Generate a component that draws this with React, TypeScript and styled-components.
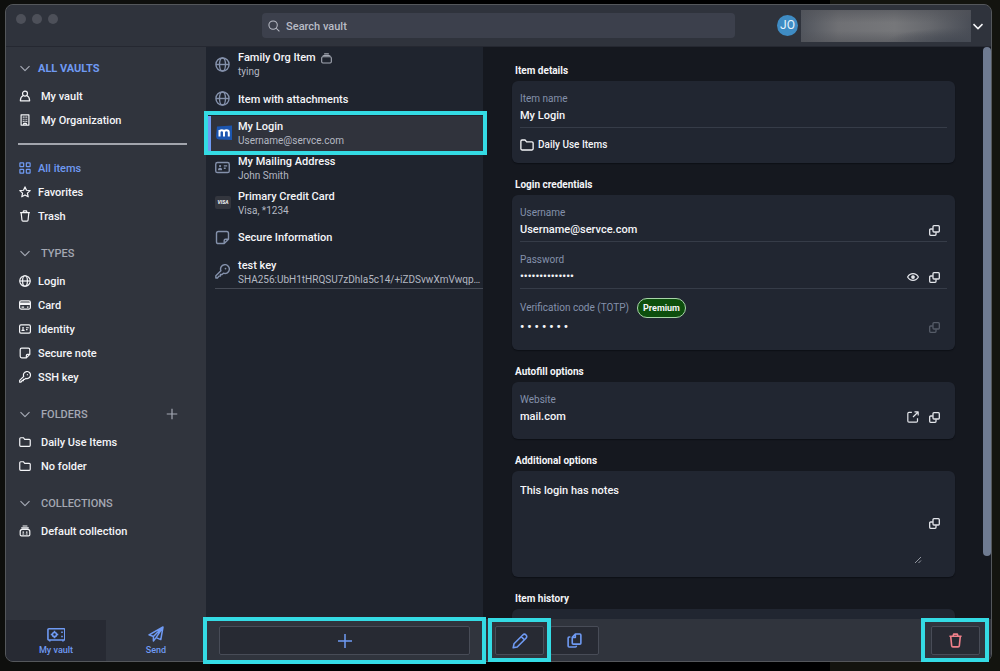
import React from "react";
import styled, { createGlobalStyle, css } from "styled-components";

const color = {
  chrome: "#30343d",
  chromeDark: "#272a33",
  list: "#1f242e",
  page: "#15181f",
  card: "#212631",
  line: "#363c48",
  text: "#f4f5f8",
  sub: "#b4b8c2",
  muted: "#a4a8b3",
  label: "#8491ab",
  blue: "#6f9af3",
  cyan: "#34dbe4",
  red: "#f0808a",
};

const GlobalStyle = createGlobalStyle`
  * { box-sizing: border-box; }
  body {
    margin: 0;
    background: linear-gradient(90deg, #0e0f0d 21%, #000 21%, #000 83%, #13140f 83%);
    color: ${color.text};
    font: 500 11px/16px Roboto, "Liberation Sans", sans-serif;
  }
  button, input, textarea { font: inherit; color: inherit; }
  button { border: 0; padding: 0; background: none; cursor: pointer; }
  ul { list-style: none; margin: 0; padding: 0; }
`;

const Page = styled.div`
  display: flex;
  height: 100vh;
  padding: 4px 8px 9px 5px;
`;

const AppWindow = styled.div`
  flex: 1;
  min-width: 0;
  display: flex;
  flex-direction: column;
  border: 1px solid #54575b;
  border-radius: 8px;
  background: ${color.chrome};
`;

const Header = styled.header`
  display: grid;
  grid-template-columns: 1fr 48% 1fr;
  height: 42px;
  border-bottom: 1px solid #252831;
  border-radius: 8px 8px 0 0;
  background: #2f333c;
`;

const Lights = styled.div`
  display: flex;
  gap: 6px;
  padding: 9px 10px;
`;

const Light = styled.span`
  width: 10px;
  height: 10px;
  border-radius: 50%;
  background: #4d5059;
`;

const Search = styled.label`
  align-self: center;
  display: flex;
  align-items: center;
  gap: 6px;
  height: 25px;
  padding: 0 6px;
  border-radius: 4px;
  background: #3c404c;
  color: #b9bcc6;
`;

const SearchInput = styled.input`
  flex: 1;
  border: 0;
  padding: 2px 0 0;
  background: none;
  outline: 0;
  &::placeholder { color: #b9bcc6; opacity: 1; }
`;

const Account = styled.button`
  justify-self: end;
  align-self: center;
  display: flex;
  align-items: center;
  gap: 1px;
  padding-right: 7px;
`;

const Avatar = styled.span`
  width: 21px;
  height: 21px;
  margin-right: 2px;
  border-radius: 50%;
  background: #3f8cc4;
  color: #e8f4fc;
  font-size: 12px;
  font-weight: 400;
  line-height: 21px;
  text-align: center;
`;

const Redacted = styled.span`
  width: 170px;
  height: 32px;
  background:
    radial-gradient(ellipse at 92% 100%, #454a54 0, transparent 32%),
    linear-gradient(180deg, rgba(80, 82, 88, 0.6), transparent 40%, transparent 65%, rgba(80, 82, 88, 0.6)),
    linear-gradient(90deg, #51555d, #6f7074 22%, #76777a 55%, #67696e 75%, #4a4e57);
`;

const Columns = styled.div`
  flex: 1;
  min-height: 0;
  display: grid;
  grid-template-columns: 200px 277px minmax(0, 1fr);
`;

const Column = styled.div`
  display: flex;
  flex-direction: column;
  min-height: 0;
  min-width: 0;
`;

const Nav = styled.nav`
  flex: 1;
  display: flex;
  flex-direction: column;
  gap: 9px;
  padding: 5px 0;
  line-height: 17px;
`;

const Group = styled.section``;

const GroupHead = styled.div<{ $active?: boolean }>`
  display: flex;
  align-items: center;
  justify-content: space-between;
  height: 32px;
  padding: 0 28px 0 13px;
  color: ${(p) => (p.$active ? color.blue : color.muted)};
  font-weight: ${(p) => (p.$active ? 700 : 500)};
`;

const NavButton = styled.button<{ $wide?: boolean; $active?: boolean }>`
  display: flex;
  align-items: center;
  gap: ${(p) => (p.$wide ? 10 : 7)}px;
  color: ${(p) => (p.$active ? color.blue : "inherit")};
  font-weight: inherit;
  svg { flex: none; }
`;

const NavItem = styled.li`
  display: flex;
  height: 24px;
  padding-left: 13px;
`;

const Divider = styled.hr`
  height: 2px;
  margin: 2px 19px 2px 12px;
  border: 0;
  background: #a2a5ad;
`;

const Tabs = styled.div`
  display: grid;
  grid-template-columns: 1fr 1fr;
  height: 41px;
`;

const Tab = styled.button<{ $active?: boolean }>`
  display: flex;
  flex-direction: column;
  align-items: center;
  justify-content: center;
  gap: 1px;
  padding-top: 2px;
  border-radius: 0 0 0 7px;
  background: ${(p) => (p.$active ? color.chromeDark : "transparent")};
  color: ${color.blue};
  font-size: 9px;
  line-height: 14px;
`;

const ItemColumn = styled(Column)`
  background: ${color.list};
`;

const Items = styled.ul`
  display: grid;
  grid-auto-rows: 1fr;
  height: 242px;
  margin-bottom: auto;
`;

const ItemRow = styled.li<{ $selected?: boolean; $last?: boolean }>`
  position: relative;
  display: flex;
  min-width: 0;
  padding-left: 9px;
  ${(p) => p.$selected && css`
    background: #30333c;
    box-shadow: inset 5px 0 ${color.blue};
  `}
  ${(p) => p.$last && css`
    &::after {
      content: "";
      position: absolute;
      inset: auto 0 0 9px;
      height: 1px;
      background: #454a55;
    }
  `}
`;

const ItemButton = styled.button`
  flex: 1;
  min-width: 0;
  display: grid;
  grid-template-columns: 16px minmax(0, 1fr);
  align-items: center;
  gap: 7px;
  text-align: left;
  color: #8491ab;
`;

const ItemText = styled.span`
  display: flex;
  flex-direction: column;
  padding-top: 2px;
`;

const ItemTitle = styled.span`
  display: flex;
  align-items: center;
  gap: 5px;
  color: ${color.text};
  line-height: 14px;
  svg { color: ${color.muted}; }
`;

const ItemSub = styled.span`
  color: ${color.sub};
  font-size: 10px;
  font-weight: 400;
  line-height: 14px;
  white-space: nowrap;
`;

const CardBrand = styled.span`
  height: 13px;
  border-radius: 2px;
  background: #33363e;
  color: #e6e7ea;
  font-size: 5px;
  font-style: italic;
  font-weight: 900;
  line-height: 13px;
  text-align: center;
`;

const Footer = styled.footer<{ $round?: boolean }>`
  display: flex;
  gap: 6px;
  height: 42px;
  padding: ${(p) => (p.$round ? "7px 11px 6px 12px" : "7px 13px 6px")};
  background: ${color.chrome};
  border-radius: ${(p) => (p.$round ? "0 0 7px 0" : "0")};
`;

const Action = styled.div<{ $grow?: boolean; $end?: boolean }>`
  position: relative;
  display: flex;
  width: 49px;
  ${(p) => p.$grow && css`flex: 1;`}
  ${(p) => p.$end && css`margin-left: auto;`}
`;

const ActionButton = styled.button<{ $danger?: boolean }>`
  flex: 1;
  display: flex;
  align-items: center;
  justify-content: center;
  border: 1px solid #484c57;
  border-radius: 2px;
  background: ${color.chromeDark};
  color: ${(p) => (p.$danger ? color.red : color.blue)};
`;

const Highlight = styled.span<{ $inset: string }>`
  position: absolute;
  z-index: 2;
  inset: ${(p) => p.$inset};
  border: 4px solid ${color.cyan};
  pointer-events: none;
`;

const DetailColumn = styled(Column)`
  background: ${color.page};
  border-radius: 0 0 7px 0;
`;

const DetailBody = styled.div`
  flex: 1;
  min-height: 0;
  display: flex;
`;

const DetailScroll = styled.main`
  flex: 1;
  min-width: 0;
  overflow: auto;
  scrollbar-width: none;
  display: flex;
  flex-direction: column;
  gap: 10px;
  padding: 12px 28px 12px 29px;
`;

const ScrollTrack = styled.div`
  width: 8px;
`;

const ScrollThumb = styled.div`
  height: 89%;
  border-radius: 4px;
  background: #6f7b91;
`;

const SectionTitle = styled.h2`
  margin: 0;
  padding: 2px 0 0 3px;
  font-size: 10px;
  font-weight: 700;
  line-height: 20px;
`;

const Card = styled.div<{ $min: number }>`
  position: relative;
  min-height: ${(p) => p.$min}px;
  padding: 0 8px;
  border-radius: 6px;
  background: ${color.card};
  box-shadow: 0 1px 1px #0d1016;
`;

const Field = styled.div<{ $line?: boolean; $top?: number }>`
  display: grid;
  gap: ${(p) => (p.$top ? 1 : 2)}px;
  padding: ${(p) => p.$top ?? 11}px 0 3px;
  border-bottom: ${(p) => (p.$line ? `1px solid ${color.line}` : "0")};
`;

const LabelRow = styled.div`
  display: flex;
  align-items: center;
  gap: 8px;
`;

const Label = styled.label`
  color: ${color.label};
  font-size: 10px;
  font-weight: 400;
  line-height: 14px;
`;

const Premium = styled.span`
  padding: 0 5px;
  border: 1px solid #a8d5a8;
  border-radius: 10px;
  background: #0d4f0d;
  font-size: 9px;
  font-weight: 700;
  line-height: 18px;
`;

const ValueRow = styled.div`
  display: flex;
  align-items: center;
  gap: 10px;
  height: 16px;
  padding-right: 7px;
`;

const Value = styled.input<{ $large?: boolean }>`
  flex: 1;
  min-width: 0;
  height: 16px;
  border: 0;
  padding: 0;
  background: none;
  outline: 0;
  ${(p) => p.$large && css`
    font-size: 12px;
    font-weight: 700;
  `}
`;

const IconButton = styled.button`
  display: flex;
  color: #e3e5ea;
  &:disabled { color: #565c68; }
`;

const FolderRow = styled.div`
  display: flex;
  align-items: center;
  gap: 4px;
  height: 33px;
  font-size: 10px;
`;

const NotesRow = styled.div`
  display: flex;
  align-items: center;
  height: 104px;
  padding-right: 7px;
`;

const NotesBox = styled.div`
  position: relative;
  flex: 1;
  display: flex;
  height: 84px;
  margin-right: 5px;
  svg { position: absolute; right: 2px; bottom: 1px; color: #b0b4bd; }
`;

const Notes = styled.textarea`
  flex: 1;
  border: 0;
  padding: 2px 0;
  background: none;
  outline: 0;
  resize: none;
`;

const shapes: Record<string, React.ReactNode> = {
  chevron: <path d="M2 5.5l6 6 6-6" />,
  plus: <path d="M8 1v14M1 8h14" />,
  search: <><circle cx="6.8" cy="6.8" r="5.6" /><path d="M11 11l4.2 4.2" /></>,
  user: <><circle cx="8" cy="4.8" r="3.3" /><path d="M5.6 7.4C3.4 8.6 1.8 11 1.8 14.4h12.4c0-3.4-1.6-5.8-3.8-7" /></>,
  building: <><path d="M2.8 14.8V1.2h10.4v13.6zM6.3 15v-2.6h3.4V15" /><path d="M5 4.200h1.400M7.300 4.200h1.400M9.600 4.200H11M5 7h1.400M7.300 7h1.400M9.600 7H11M5 9.800h1.400M7.300 9.800h1.400M9.600 9.800H11" /></>,
  grid: <><rect x="1.2" y="1.2" width="5" height="5" rx=".6" /><rect x="9.8" y="1.2" width="5" height="5" rx=".6" /><rect x="1.2" y="9.8" width="5" height="5" rx=".6" /><rect x="9.8" y="9.8" width="5" height="5" rx=".6" /></>,
  star: <path d="M8 1.2l2 4.5 4.9.5-3.7 3.3 1.1 4.9L8 11.9l-4.3 2.5 1.1-4.9L1.100 6.200l4.900-.5z" />,
  trash: <path d="M1.500 3.400h13M5.400 3.200L6 1.200h4l.6 2M2.900 3.600l1 9.800c.1.900.6 1.400 1.400 1.400h5.400c.8 0 1.300-.5 1.400-1.400l1-9.800" />,
  globe: <><circle cx="8" cy="8" r="7" /><ellipse cx="8" cy="8" rx="3.200" ry="7" /><path d="M1 8h14" /></>,
  card: <><rect x=".8" y="2.600" width="14.400" height="10.800" rx="2" /><path d="M1 5.600h14M1 7.200h14M3.400 10.700h3.400M10.600 10.700h2" /></>,
  identity: <><rect x=".8" y="2.600" width="14.400" height="10.800" rx="1.800" /><circle cx="5.400" cy="6.500" r="1.200" fill="currentColor" stroke="none" /><path d="M3.200 10.800c0-1.800.9-2.600 2.200-2.600s2.200.8 2.200 2.600z" fill="currentColor" stroke="none" /><path d="M9.400 6.300h3.600M9.400 8.800h2" /></>,
  note: <><path d="M9.800 14.400H3.600c-1.200 0-2-.8-2-2V3.600c0-1.200.8-2 2-2h8.800c1.200 0 2 .8 2 2v6.200z" /><path d="M9.800 14.200v-3c0-.9.500-1.400 1.400-1.400h3" /></>,
  key: <><path d="M6.300 7.200A4.700 4.700 0 1 1 9 9.800L7.500 11.200H5.800v1.700H4.200L2.600 14.900H.9v-2.400z" /><circle cx="11.200" cy="4.900" r=".9" fill="currentColor" stroke="none" /></>,
  folder: <path d="M1 12.400V3.600c0-.8.500-1.300 1.300-1.300h3.500l1.800 2.100h6.100c.8 0 1.300.5 1.300 1.300v6.700c0 .8-.5 1.300-1.300 1.300H2.300c-.8 0-1.300-.5-1.300-1.300z" />,
  collection: <><rect x="1" y="5.400" width="14" height="9.200" rx="1.800" /><path d="M2.600 5.200c0-1 .6-1.600 1.600-1.600h7.600c1 0 1.600.6 1.600 1.600M4.600 1.200h6.800" /></>,
  collectionShared: <><path d="M1.600 13V8.600c0-1.800 1-2.800 2.800-2.800h7.200c1.800 0 2.800 1 2.800 2.800V13c0 1-.6 1.600-1.600 1.600H3.200c-1 0-1.600-.6-1.600-1.600zM3 3.700h10M4.800 1.300h6.400" /><path d="M4.700 9.500h2M9.300 9.500h2M4.500 12h2.400M9.100 12h2.400" /></>,
  vault: <><rect x="1" y="1.800" width="18" height="12" rx="1" /><path d="M3 14v1.500M17 14v1.500M16 4.800v1.500M16 9.300v1.500" /><circle cx="8" cy="8" r="2.200" /><path d="M8 4v1.800M8 10.200V12M4 8h1.800M10.200 8H12" /></>,
  send: <path d="M1 8.800L15 1l-2.200 12.600-4.700-2L5.400 15V10.500zM5.400 10.500L15 1 8.100 11.600" />,
  copy: <><rect x="5.800" y="1" width="9.200" height="9.200" rx="1.400" /><path d="M5.600 5.800H2.400C1.500 5.800 1 6.300 1 7.200v6.400c0 .9.500 1.400 1.400 1.400h6.400c.9 0 1.400-.5 1.400-1.400v-3.200" /></>,
  eye: <><path d="M.8 8C2.300 5.200 4.900 3.500 8 3.500S13.700 5.200 15.200 8C13.700 10.800 11.100 12.500 8 12.500S2.300 10.800.8 8z" /><circle cx="8" cy="8" r="1.700" fill="currentColor" /></>,
  external: <path d="M6.500 1.800H2.600c-.9 0-1.500.6-1.500 1.500v9.900c0 .9.600 1.500 1.500 1.500h9.900c.9 0 1.500-.6 1.500-1.500V9.500M10 1.200h4.900v4.900M14.500 1.600L8 8" />,
  pencil: <path d="M1.200 14.800l.8-4L10.800 2c1-1 2.200-1 3.200 0s1 2.200 0 3.200L5.200 14zM9.300 3.600l3.100 3.100" />,
  clone: <><path d="M5.600 10.800V4.600l3.300-3.500h4.800c.7 0 1.100.4 1.100 1.100v8.600c0 .7-.4 1.100-1.100 1.100h-7c-.7 0-1.100-.4-1.100-1.100zM5.700 4.800h3.200V1.300" /><path d="M3.600 4.200H2.300c-.7 0-1.100.4-1.100 1.100v8.500c0 .7.400 1.100 1.100 1.100h6.600c.7 0 1.100-.4 1.100-1.100v-.3" /></>,
  grip: <path d="M2 14L14 2M9 14l5-5" />,
};

function Icon({ name, size = 12, stroke = 1.6 }: { name: string; size?: number; stroke?: number }) {
  const wide = name === "vault";
  return (
    <svg
      width={wide ? (size * 20) / 16 : size}
      height={size}
      viewBox={wide ? "0 0 20 16" : "0 0 16 16"}
      fill="none"
      stroke="currentColor"
      strokeWidth={stroke}
      strokeLinejoin="round"
      aria-hidden
    >
      {shapes[name]}
    </svg>
  );
}

function MailLogo() {
  return (
    <svg width="18" height="18" viewBox="0 0 18 18" aria-hidden>
      <path d="M2 2.500L17 1.500V16L4 15.500Q1 15 1 12z" fill="#1c56b0" />
      <path d="M4.500 12.500V6M4.500 8.500C4.500 5.500 9 5.500 9 8.500V12.500M9 8.500C9 5.500 13.800 5.500 13.800 8.500V12.500" fill="none" stroke="#fff" strokeWidth="2" />
    </svg>
  );
}

type Entry = { icon: string; label: string; active?: boolean };

function NavList({ entries, wide }: { entries: Entry[]; wide?: boolean }) {
  return (
    <ul>
      {entries.map((e) => (
        <NavItem key={e.label}>
          <NavButton $wide={wide} $active={e.active}>
            <Icon name={e.icon} />
            {e.label}
          </NavButton>
        </NavItem>
      ))}
    </ul>
  );
}

const GreyChevron = styled.span`
  display: flex;
  color: ${color.muted};
`;

function NavGroup(props: { title: string; entries: Entry[]; wide?: boolean; active?: boolean; add?: boolean }) {
  return (
    <Group>
      <GroupHead $active={props.active}>
        <NavButton $wide={!props.active}>
          <GreyChevron><Icon name="chevron" /></GreyChevron>
          {props.title}
        </NavButton>
        {props.add && (
          <NavButton aria-label="Add folder"><Icon name="plus" /></NavButton>
        )}
      </GroupHead>
      <NavList entries={props.entries} wide={props.wide} />
    </Group>
  );
}

const items = [
  { icon: <Icon name="globe" size={15} stroke={1.500} />, title: "Family Org Item", sub: "tying", shared: true },
  { icon: <Icon name="globe" size={15} stroke={1.500} />, title: "Item with attachments" },
  { icon: <MailLogo />, title: "My Login", sub: "Username@servce.com", selected: true },
  { icon: <Icon name="identity" size={15} stroke={1.500} />, title: "My Mailing Address", sub: "John Smith" },
  { icon: <CardBrand>VISA</CardBrand>, title: "Primary Credit Card", sub: "Visa, *1234" },
  { icon: <Icon name="note" size={15} stroke={1.500} />, title: "Secure Information" },
  { icon: <Icon name="key" size={15} stroke={1.500} />, title: "test key", sub: "SHA256:UbH1tHRQSU7zDhla5c14/+iZDSvwXmVwqp…" },
];

function CopyButton({ what, disabled }: { what: string; disabled?: boolean }) {
  return (
    <IconButton aria-label={`Copy ${what}`} disabled={disabled}>
      <Icon name="copy" size={11} stroke={1.900} />
    </IconButton>
  );
}

export default function App() {
  return (
    <>
      <GlobalStyle />
      <Page>
        <AppWindow>
          <Header>
            <Lights><Light /><Light /><Light /></Lights>
            <Search>
              <Icon name="search" stroke={1.400} />
              <SearchInput type="search" placeholder="Search vault" aria-label="Search vault" />
            </Search>
            <Account aria-label="Account">
              <Avatar>JO</Avatar>
              <Redacted />
              <Icon name="chevron" stroke={2} />
            </Account>
          </Header>

          <Columns>
            <Column>
              <Nav>
                <NavGroup title="ALL VAULTS" active wide entries={[
                  { icon: "user", label: "My vault" },
                  { icon: "building", label: "My Organization" },
                ]} />
                <Divider />
                <NavList entries={[
                  { icon: "grid", label: "All items", active: true },
                  { icon: "star", label: "Favorites" },
                  { icon: "trash", label: "Trash" },
                ]} />
                <NavGroup title="TYPES" entries={[
                  { icon: "globe", label: "Login" },
                  { icon: "card", label: "Card" },
                  { icon: "identity", label: "Identity" },
                  { icon: "note", label: "Secure note" },
                  { icon: "key", label: "SSH key" },
                ]} />
                <NavGroup title="FOLDERS" add wide entries={[
                  { icon: "folder", label: "Daily Use Items" },
                  { icon: "folder", label: "No folder" },
                ]} />
                <NavGroup title="COLLECTIONS" wide entries={[
                  { icon: "collectionShared", label: "Default collection" },
                ]} />
              </Nav>
              <Tabs>
                <Tab $active><Icon name="vault" size={15} stroke={1.700} />My vault</Tab>
                <Tab><Icon name="send" size={16} stroke={1.500} />Send</Tab>
              </Tabs>
            </Column>

            <ItemColumn>
              <Items>
                {items.map((it, i) => (
                  <ItemRow key={it.title} $selected={it.selected} $last={i === items.length - 1}>
                    <ItemButton>
                      {it.icon}
                      <ItemText>
                        <ItemTitle>
                          {it.title}
                          {it.shared && <Icon name="collection" size={11} />}
                        </ItemTitle>
                        {it.sub && <ItemSub>{it.sub}</ItemSub>}
                      </ItemText>
                    </ItemButton>
                    {it.selected && <Highlight $inset="-5px -4px -4px -2px" />}
                  </ItemRow>
                ))}
              </Items>
              <Footer>
                <Action $grow>
                  <ActionButton aria-label="Add item"><Icon name="plus" size={16} stroke={1.500} /></ActionButton>
                  <Highlight $inset="-9px -16px -9px -16px" />
                </Action>
              </Footer>
            </ItemColumn>

            <DetailColumn>
              <DetailBody>
                <DetailScroll>
                  <section>
                    <SectionTitle>Item details</SectionTitle>
                    <Card $min={82}>
                      <Field $line>
                        <Label htmlFor="name">Item name</Label>
                        <ValueRow><Value id="name" readOnly value="My Login" /></ValueRow>
                      </Field>
                      <FolderRow><Icon name="folder" size={14} stroke={1.500} />Daily Use Items</FolderRow>
                    </Card>
                  </section>
                  <section>
                    <SectionTitle>Login credentials</SectionTitle>
                    <Card $min={155}>
                      <Field $line>
                        <Label htmlFor="username">Username</Label>
                        <ValueRow>
                          <Value id="username" readOnly value="Username@servce.com" />
                          <CopyButton what="username" />
                        </ValueRow>
                      </Field>
                      <Field $line>
                        <Label htmlFor="password">Password</Label>
                        <ValueRow>
                          <Value id="password" type="password" readOnly value="correcthorse14" />
                          <IconButton aria-label="Show password"><Icon name="eye" /></IconButton>
                          <CopyButton what="password" />
                        </ValueRow>
                      </Field>
                      <Field $top={9}>
                        <LabelRow>
                          <Label htmlFor="totp">Verification code (TOTP)</Label>
                          <Premium>Premium</Premium>
                        </LabelRow>
                        <ValueRow>
                          <Value id="totp" $large readOnly value="• • • • • • •" />
                          <CopyButton what="verification code" disabled />
                        </ValueRow>
                      </Field>
                    </Card>
                  </section>
                  <section>
                    <SectionTitle>Autofill options</SectionTitle>
                    <Card $min={57}>
                      <Field>
                        <Label htmlFor="website">Website</Label>
                        <ValueRow>
                          <Value id="website" readOnly value="mail.com" />
                          <IconButton aria-label="Launch website"><Icon name="external" /></IconButton>
                          <CopyButton what="website" />
                        </ValueRow>
                      </Field>
                    </Card>
                  </section>
                  <section>
                    <SectionTitle>Additional options</SectionTitle>
                    <Card $min={106}>
                      <NotesRow>
                        <NotesBox>
                          <Notes readOnly aria-label="Notes" value="This login has notes" />
                          <Icon name="grip" size={8} />
                        </NotesBox>
                        <CopyButton what="notes" />
                      </NotesRow>
                    </Card>
                  </section>
                  <section>
                    <SectionTitle>Item history</SectionTitle>
                    <Card $min={60} />
                  </section>
                </DetailScroll>
                <ScrollTrack><ScrollThumb /></ScrollTrack>
              </DetailBody>
              <Footer $round>
                <Action>
                  <ActionButton aria-label="Edit"><Icon name="pencil" size={16} stroke={1.600} /></ActionButton>
                  <Highlight $inset="-8px -7px -7px -7px" />
                </Action>
                <Action>
                  <ActionButton aria-label="Clone"><Icon name="clone" size={15} stroke={1.700} /></ActionButton>
                </Action>
                <Action $end>
                  <ActionButton $danger aria-label="Delete"><Icon name="trash" size={15} stroke={1.700} /></ActionButton>
                  <Highlight $inset="-8px -9px -7px -10px" />
                </Action>
              </Footer>
            </DetailColumn>
          </Columns>
        </AppWindow>
      </Page>
    </>
  );
}
